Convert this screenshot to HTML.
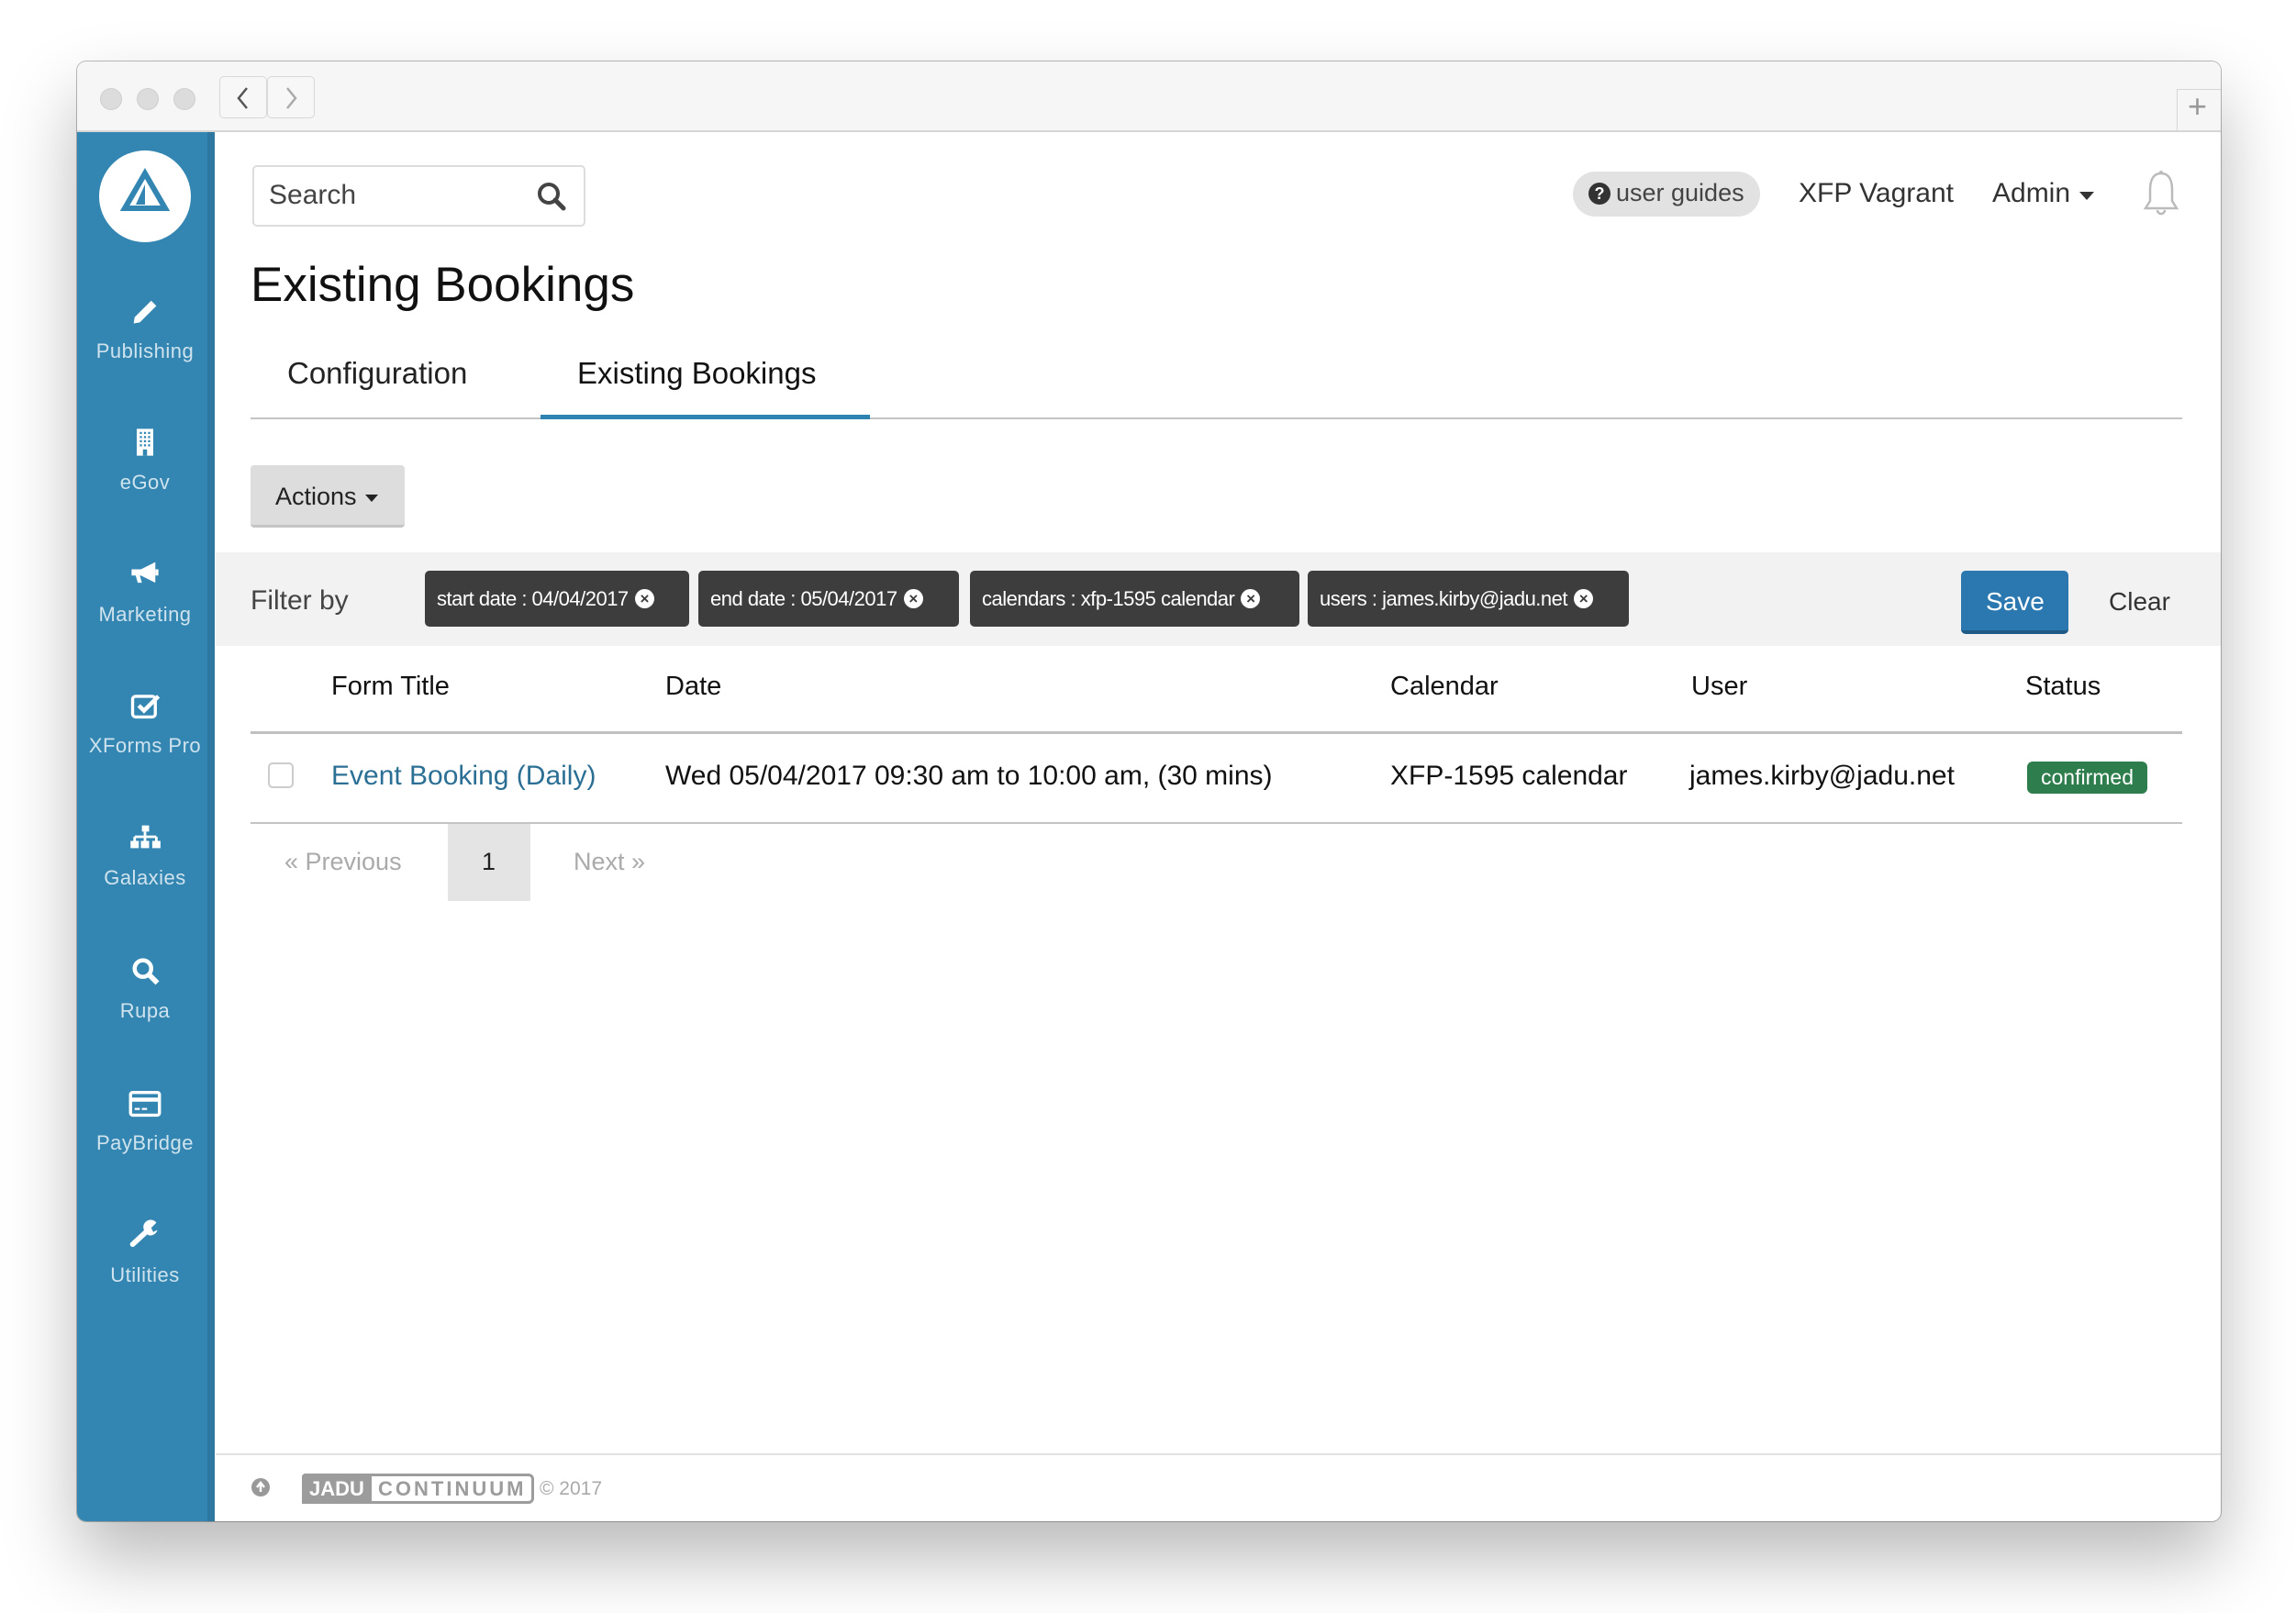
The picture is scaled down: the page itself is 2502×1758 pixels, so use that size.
<!DOCTYPE html>
<html><head><meta charset="utf-8"><style>
*{margin:0;padding:0;box-sizing:border-box}
body{width:2502px;height:1758px;background:#fff;font-family:"Liberation Sans",sans-serif;position:relative;overflow:hidden;color:#111}
.a{position:absolute;white-space:nowrap}
#win{position:absolute;left:84px;top:67px;width:2336px;height:1591px;border-radius:10px;overflow:hidden;box-shadow:0 40px 80px rgba(0,0,0,.28),0 0 0 1px #bbb;background:#fff}
#tb{position:absolute;left:0;top:0;width:100%;height:77px;background:#f6f6f6;border-bottom:2px solid #d6d6d6}
.dot{position:absolute;top:29px;width:24px;height:24px;border-radius:50%;background:#dcdcdc;border:1px solid #cfcfcf}
#side{position:absolute;left:0;top:77px;width:150px;height:1514px;background:#3386b1}
#side .strip{position:absolute;right:0;top:0;width:8px;height:100%;background:#2d77a0}
.nl{position:absolute;left:0;width:148px;text-align:center;color:#cfe3ee;font-size:22px;letter-spacing:.5px}
.ni{position:absolute;left:56px;width:36px;height:36px}
.chip{position:absolute;top:555px;height:61px;background:#3d3d3d;border-radius:5px;color:#fff;font-size:22px;line-height:61px;padding-left:13px;letter-spacing:-.5px}
.chip i{display:inline-block;width:21px;height:21px;border-radius:50%;background:#fff;color:#3d3d3d;font-style:normal;font-size:17px;line-height:21px;text-align:center;font-weight:bold;margin-left:7px;vertical-align:middle;position:relative;top:-2px}
.th{font-size:29px;top:663px;color:#111}
.td{font-size:30px;top:760px;color:#111}
</style></head><body>
<div id="win">
 <div id="tb">
  <div class="dot" style="left:25px"></div><div class="dot" style="left:65px"></div><div class="dot" style="left:105px"></div>
  <div class="a" style="left:155px;top:16px;width:52px;height:46px;border:1px solid #d8d8d8;border-radius:5px;background:#f7f7f7"></div>
  <div class="a" style="left:207px;top:16px;width:52px;height:46px;border:1px solid #d8d8d8;border-radius:5px;background:#f7f7f7"></div>
  <svg class="a" style="left:170px;top:26px" width="22" height="28"><path d="M15 3 L6 14 L15 25" stroke="#555" stroke-width="2.5" fill="none"/></svg>
  <svg class="a" style="left:222px;top:26px" width="22" height="28"><path d="M7 3 L16 14 L7 25" stroke="#aaa" stroke-width="2.5" fill="none"/></svg>
  <div class="a" style="left:2288px;top:30px;width:48px;height:47px;border-left:1px solid #d6d6d6;border-top:1px solid #d6d6d6"></div>
  <div class="a" style="left:2300px;top:28px;font-size:36px;color:#999">+</div>
 </div>
 <div id="side"><div class="strip"></div>
  <div class="a" style="left:24px;top:20px;width:100px;height:100px;border-radius:50%;background:#fff"></div>
  <svg class="a" style="left:42px;top:35px" width="64" height="64"><path d="M32 10 L54 48 L10 48 Z" stroke="#3386b1" stroke-width="6" fill="none" stroke-linejoin="miter"/><path d="M32 22 L32 44 L22 44 Z" fill="#3386b1"/></svg>
  <svg class="ni" style="top:177px" viewBox="0 0 32 32"><path d="M6 22 L22 6 L27 11 L11 27 L5 28 Z" fill="#fff"/></svg>
  <div class="nl" style="top:226px">Publishing</div>
  <svg class="ni" style="top:320px" viewBox="0 0 32 32"><rect x="8" y="3" width="16" height="26" fill="#fff"/><g fill="#3386b1"><rect x="11" y="6" width="2" height="2"/><rect x="15" y="6" width="2" height="2"/><rect x="19" y="6" width="2" height="2"/><rect x="11" y="10" width="2" height="2"/><rect x="15" y="10" width="2" height="2"/><rect x="19" y="10" width="2" height="2"/><rect x="11" y="14" width="2" height="2"/><rect x="15" y="14" width="2" height="2"/><rect x="19" y="14" width="2" height="2"/><rect x="11" y="18" width="2" height="2"/><rect x="15" y="18" width="2" height="2"/><rect x="19" y="18" width="2" height="2"/><rect x="14" y="23" width="4" height="6"/></g></svg>
  <div class="nl" style="top:369px">eGov</div>
  <svg class="ni" style="top:463px" viewBox="0 0 32 32"><path d="M3 12 H12 L26 5 V25 L12 18 H11 L13 25 H9 L7 18 H3 Z" fill="#fff"/><rect x="26" y="12" width="3" height="6" fill="#fff"/></svg>
  <div class="nl" style="top:513px">Marketing</div>
  <svg class="ni" style="top:607px" viewBox="0 0 32 32"><rect x="4" y="7" width="22" height="20" rx="3" fill="none" stroke="#fff" stroke-width="3"/><path d="M10 16 L15 21 L29 7" stroke="#fff" stroke-width="4" fill="none"/></svg>
  <div class="nl" style="top:656px">XForms Pro</div>
  <svg class="ni" style="top:750px" viewBox="0 0 32 32"><rect x="13" y="5" width="7" height="6" fill="#fff"/><path d="M16 11 V16 M6 16 H27 M6 16 V20 M16 16 V20 M27 16 V20" stroke="#fff" stroke-width="2.5" fill="none"/><rect x="2" y="20" width="8" height="7" fill="#fff"/><rect x="12" y="20" width="8" height="7" fill="#fff"/><rect x="23" y="20" width="8" height="7" fill="#fff"/></svg>
  <div class="nl" style="top:800px">Galaxies</div>
  <svg class="ni" style="top:897px" viewBox="0 0 32 32"><circle cx="14" cy="13" r="8" stroke="#fff" stroke-width="4" fill="none"/><path d="M20 19 L28 27" stroke="#fff" stroke-width="5"/></svg>
  <div class="nl" style="top:945px">Rupa</div>
  <svg class="ni" style="top:1041px" viewBox="0 0 32 32"><rect x="2" y="5" width="28" height="22" rx="2" fill="none" stroke="#fff" stroke-width="3"/><rect x="2" y="10" width="28" height="4" fill="#fff"/><rect x="6" y="20" width="5" height="2" fill="#fff"/><rect x="13" y="20" width="5" height="2" fill="#fff"/></svg>
  <div class="nl" style="top:1089px">PayBridge</div>
  <svg class="ni" style="top:1183px" viewBox="0 0 32 32"><path d="M4 26 L17 14" stroke="#fff" stroke-width="5" stroke-linecap="round"/><path d="M15 12 A7 7 0 0 1 27 5 L22 10 L24 14 L28 12 A7 7 0 0 1 19 17 Z" fill="#fff"/></svg>
  <div class="nl" style="top:1233px">Utilities</div>
 </div>

 <div class="a" style="left:191px;top:113px;width:363px;height:67px;border:2px solid #ddd;border-radius:5px"></div>
 <div class="a" style="left:209px;top:129px;font-size:30px;color:#444">Search</div>
 <svg class="a" style="left:500px;top:130px" width="34" height="34"><circle cx="14" cy="14" r="10" stroke="#444" stroke-width="4" fill="none"/><path d="M21 21 L30 30" stroke="#444" stroke-width="5" stroke-linecap="round"/></svg>
 <div class="a" style="left:189px;top:213px;font-size:53px;color:#111">Existing Bookings</div>

 <div class="a" style="left:1630px;top:120px;width:204px;height:49px;border-radius:25px;background:#e2e2e2"></div>
 <div class="a" style="left:1647px;top:132px;width:24px;height:24px;border-radius:50%;background:#333;color:#fff;font-size:18px;font-weight:bold;text-align:center;line-height:24px">?</div>
 <div class="a" style="left:1677px;top:128px;font-size:27px;color:#444">user guides</div>
 <div class="a" style="left:1876px;top:127px;font-size:30px;color:#333">XFP Vagrant</div>
 <div class="a" style="left:2087px;top:127px;font-size:30px;color:#333">Admin</div>
 <svg class="a" style="left:2182px;top:142px" width="16" height="10"><path d="M0 0 H16 L8 9Z" fill="#333"/></svg>
 <svg class="a" style="left:2249px;top:116px" width="44" height="58"><path d="M22 6 C12 6 10 16 10 24 V36 L5 44 H39 L34 36 V24 C34 16 32 6 22 6Z M18 46 A4 4 0 0 0 26 46" stroke="#bbb" stroke-width="2.5" fill="none"/><circle cx="22" cy="5" r="2" fill="#bbb"/></svg>

 <div class="a" style="left:229px;top:321px;font-size:33px;color:#222">Configuration</div>
 <div class="a" style="left:545px;top:321px;font-size:33px;color:#111">Existing Bookings</div>
 <div class="a" style="left:189px;top:388px;width:2105px;height:2px;background:#c4c4c4"></div>
 <div class="a" style="left:505px;top:385px;width:359px;height:5px;background:#2f83b0"></div>

 <div class="a" style="left:189px;top:440px;width:168px;height:68px;background:#ddd;border-radius:4px;border-bottom:3px solid #c4c4c4"></div>
 <div class="a" style="left:216px;top:459px;font-size:27px;color:#222">Actions</div>
 <svg class="a" style="left:314px;top:472px" width="14" height="9"><path d="M0 0 H14 L7 8Z" fill="#222"/></svg>

 <div class="a" style="left:151px;top:535px;width:2185px;height:102px;background:#f2f2f2"></div>
 <div class="a" style="left:189px;top:571px;font-size:30px;color:#444">Filter by</div>
 <div class="chip" style="left:379px;width:288px">start date : 04/04/2017<i>×</i></div>
 <div class="chip" style="left:677px;width:284px">end date : 05/04/2017<i>×</i></div>
 <div class="chip" style="left:973px;width:359px">calendars : xfp-1595 calendar<i>×</i></div>
 <div class="chip" style="left:1341px;width:350px">users : james.kirby@jadu.net<i>×</i></div>
 <div class="a" style="left:2053px;top:555px;width:117px;height:69px;background:#2b78b0;border-radius:5px;border-bottom:4px solid #1f5a87"></div>
 <div class="a" style="left:2080px;top:573px;font-size:28px;color:#fff">Save</div>
 <div class="a" style="left:2214px;top:573px;font-size:28px;color:#333">Clear</div>

 <div class="a th" style="left:277px;top:665px">Form Title</div>
 <div class="a th" style="left:641px;top:665px">Date</div>
 <div class="a th" style="left:1431px;top:665px">Calendar</div>
 <div class="a th" style="left:1759px;top:665px">User</div>
 <div class="a th" style="left:2123px;top:665px">Status</div>
 <div class="a" style="left:189px;top:730px;width:2105px;height:3px;background:#c0c0c0"></div>
 <div class="a" style="left:208px;top:764px;width:28px;height:28px;border:2px solid #ccc;border-radius:5px"></div>
 <div class="a td" style="left:277px;top:762px;color:#2b6f94">Event Booking (Daily)</div>
 <div class="a td" style="left:641px;top:762px">Wed 05/04/2017 09:30 am to 10:00 am, (30 mins)</div>
 <div class="a td" style="left:1431px;top:762px">XFP-1595 calendar</div>
 <div class="a td" style="left:1757px;top:762px">james.kirby@jadu.net</div>
 <div class="a" style="left:2125px;top:763px;width:131px;height:35px;background:#2e7d4c;border-radius:6px;color:#fff;font-size:23px;text-align:center;line-height:34px">confirmed</div>
 <div class="a" style="left:189px;top:829px;width:2105px;height:2px;background:#c4c4c4"></div>

 <div class="a" style="left:404px;top:831px;width:90px;height:84px;background:#e4e4e4"></div>
 <div class="a" style="left:226px;top:857px;font-size:27px;color:#aaa">« Previous</div>
 <div class="a" style="left:441px;top:857px;font-size:27px;color:#222">1</div>
 <div class="a" style="left:541px;top:857px;font-size:27px;color:#aaa">Next »</div>

 <div class="a" style="left:151px;top:1517px;width:2185px;height:2px;background:#e2e2e2"></div>
 <div class="a" style="left:190px;top:1544px;width:20px;height:20px;border-radius:50%;background:#999"></div>
 <svg class="a" style="left:190px;top:1544px" width="20" height="20"><path d="M10 15 V6 M6 10 L10 5 L14 10" stroke="#fff" stroke-width="2.5" fill="none"/></svg>
 <div class="a" style="left:245px;top:1539px;width:253px;height:33px;border:3px solid #9c9c9c;border-radius:4px 6px 6px 0"></div>
 <div class="a" style="left:245px;top:1539px;width:76px;height:33px;background:#9c9c9c;border-radius:4px 0 0 0;color:#fff;font-size:22px;font-weight:bold;text-align:center;line-height:33px">JADU</div>
 <div class="a" style="left:328px;top:1541px;font-size:22px;font-weight:bold;color:#9c9c9c;letter-spacing:3px;line-height:30px">CONTINUUM</div>
 <div class="a" style="left:504px;top:1541px;font-size:21px;color:#aaa;line-height:30px">© 2017</div>
</div>
</body></html>
